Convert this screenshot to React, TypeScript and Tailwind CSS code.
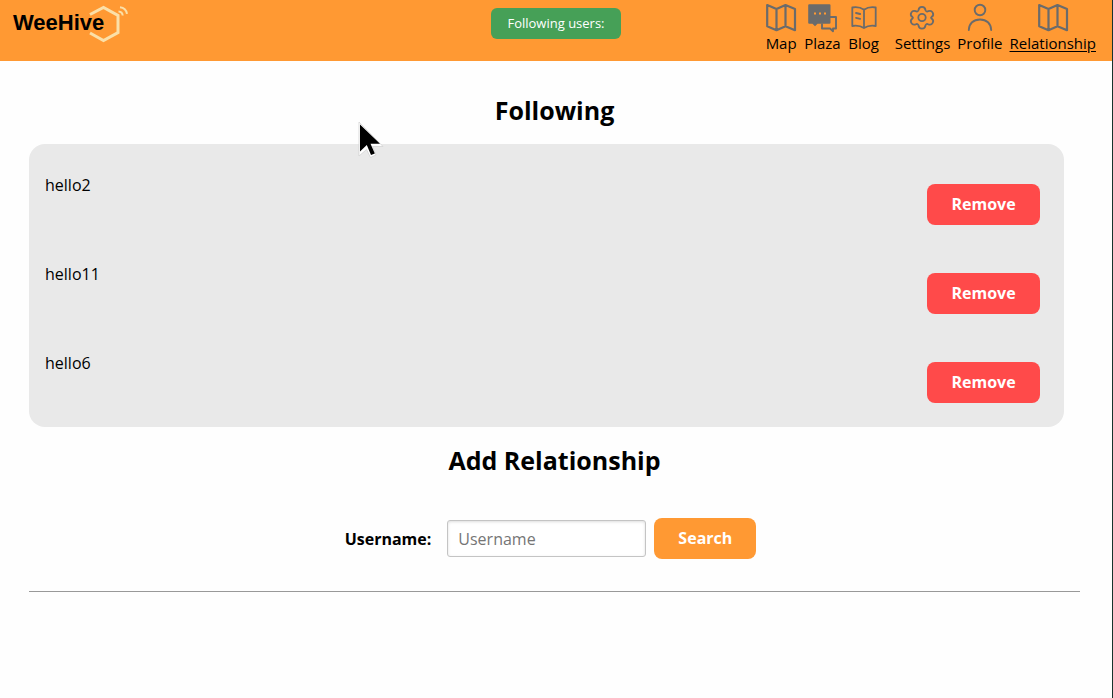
import React from "react";

const users = ["hello2", "hello11", "hello6"];

const iconClass = "block h-8 w-8 fill-none stroke-[#6b6b6b]";

function MapIcon() {
  return (
    <svg viewBox="0 0 32 32" className={iconClass} strokeWidth="2.200" strokeLinejoin="round" aria-hidden="true">
      <path d="M2.200 3 11.500 7 20.500 3 30 7V28.200L20.500 24.200 11.500 28.200 2.200 24.200ZM11.500 7V28.200M20.500 3V24.200" />
    </svg>
  );
}

function PlazaIcon() {
  return (
    <svg viewBox="0 0 32 32" className={iconClass} strokeWidth="1.9" strokeLinejoin="round" aria-hidden="true">
      <path d="M24 15h6v11.500H27v2.700L24 26.500H16v-5" />
      <path d="M3.200 2.200h20.300a1 1 0 0 1 1 1V20.800a1 1 0 0 1-1 1H11.500l-2.500 2.500L6.500 21.800H3.200a1 1 0 0 1-1-1V3.200a1 1 0 0 1 1-1Z" fill="#6b6b6b" stroke="none" />
      <path d="M8 11.500h2M13 11.500h2M18 11.500h2" stroke="#ff9933" />
    </svg>
  );
}

function BlogIcon() {
  return (
    <svg viewBox="0 0 32 32" className={iconClass} strokeWidth="1.8" strokeLinejoin="round" strokeLinecap="round" aria-hidden="true">
      <path d="M16 7.700C12.500 5.300 8.500 4.800 4.300 5.500v18.500c4.200-.7 8.200-.2 11.700 2.100 3.500-2.300 7.500-2.800 11.700-2.100V5.500c-4.200-.7-8.200-.2-11.700 2.200ZM16 7.700v18.400M8 11l4.200 1M8 15.800l4.200 1" />
    </svg>
  );
}

function SettingsIcon() {
  return (
    <svg viewBox="0 0 32 32" className={iconClass} strokeWidth="1.8" strokeLinejoin="round" aria-hidden="true">
      <circle cx="16" cy="15.500" r="3.700" />
      <path d="M12.500 8.200C13 3.800 19 3.800 19.500 8.200 20 9.500 21 9.800 22.300 9.200 26.200 7.600 29 12.700 25.600 15c-.7.500-.7 1 0 1.500 3.400 2.300.6 7.400-3.300 5.800-1.300-.6-2.300-.3-2.800 1-.5 4.400-6.500 4.400-7 0-.5-1.300-1.500-1.600-2.800-1-3.900 1.600-6.700-3.500-3.300-5.800.7-.5.7-1 0-1.500C3 12.700 5.800 7.600 9.700 9.200c1.300.6 2.300.3 2.800-1Z" />
    </svg>
  );
}

function ProfileIcon() {
  return (
    <svg viewBox="0 0 32 32" className={iconClass} strokeWidth="1.9" strokeLinecap="round" aria-hidden="true">
      <circle cx="16" cy="8" r="5.300" />
      <path d="M4.800 28C5 21.500 9.500 17.500 16 17.500s11 4 11.200 10.500" />
    </svg>
  );
}

function NavLink({ label, icon, active = false }: { label: string; icon: React.ReactNode; active?: boolean }) {
  return (
    <a href="#" className="flex flex-col items-center text-[15px] leading-[18px]">
      {icon}
      <span className={active ? "underline underline-offset-2" : ""}>{label}</span>
    </a>
  );
}

function Logo() {
  return (
    <a href="#" aria-label="WeeHive" className="block">
      <svg viewBox="0 0 132 48" className="block h-12 w-33">
        <path d="M90 14.500 103.500 7.500 118 15.500V32.500L103.500 40.500 90 33" fill="none" stroke="#fbe0a8" strokeWidth="3" />
        <path d="M118.500 11.500a4.500 4.500 0 0 1 4.200 4M120 7.200a8 8 0 0 1 7 6.600" fill="none" stroke="#fbe0a8" strokeWidth="2" />
        <text x="13" y="30" fontFamily="Liberation Sans, Arial, sans-serif" fontSize="22" fontWeight="700">WeeHive</text>
      </svg>
    </a>
  );
}

export default function App() {
  return (
    <div className="relative min-h-screen border-r border-[#17332d] bg-[#fefefe] font-['Open_Sans','Noto_Sans',sans-serif] text-base text-black">
      <header className="grid h-[61px] grid-cols-[1fr_auto_1fr] items-start bg-[#ff9933]">
        <Logo />
        <div role="status" className="mt-2 rounded-md bg-[#46a057] px-4 py-[6px] text-[13px] leading-[19px] text-white">
          Following users:
        </div>
        <nav className="flex justify-end gap-[7px] pr-4 pt-[2px]">
          <NavLink label="Map" icon={<MapIcon />} />
          <NavLink label="Plaza" icon={<PlazaIcon />} />
          <div className="mr-2"><NavLink label="Blog" icon={<BlogIcon />} /></div>
          <NavLink label="Settings" icon={<SettingsIcon />} />
          <NavLink label="Profile" icon={<ProfileIcon />} />
          <NavLink label="Relationship" icon={<MapIcon />} active />
        </nav>
      </header>

      <main className="pl-[29px] pr-8 pt-8">
        <h2 className="text-center text-[25px] leading-[35px] font-bold">Following</h2>
        <ul className="mt-4 mr-4 flex flex-col gap-9 rounded-2xl bg-[#e9e9e9] pt-7 pr-6 pb-6 pl-4">
          {users.map((name) => (
            <li key={name} className="flex items-start justify-between">
              <span className="leading-[26px]">{name}</span>
              <button type="button" aria-label={"Remove " + name} className="mt-3 h-[41px] w-[113px] rounded-lg bg-[#ff4a4a] pb-[2px] font-bold text-white">
                Remove
              </button>
            </li>
          ))}
        </ul>

        <h2 className="mt-4 text-center text-[25px] leading-[35px] font-bold">Add Relationship</h2>
        <form className="mt-10 mr-2 flex items-center justify-center gap-2">
          <label htmlFor="username" className="mr-2 font-bold">Username:</label>
          <input id="username" type="text" placeholder="Username" className="h-[37px] w-[199px] rounded-[3px] border border-[#c4c4c4] bg-white px-[10px] shadow-[inset_0_1px_3px_#dddddd] outline-none placeholder:text-[#757575]" />
          <button type="button" className="h-[41px] w-[102px] rounded-lg bg-[#ff9933] pb-[2px] font-bold text-white">Search</button>
        </form>
        <hr className="mt-8 border-[#999999]" />
      </main>

      <svg viewBox="0 0 27 38" className="pointer-events-none absolute left-[358px] top-[121px] h-[38px] w-[27px]" aria-hidden="true">
        <path d="M1 1V35L8.500 28.500 12.500 36.500 18 34 14.500 25.500H25Z" fill="#fff" stroke="#d0d0d0" strokeWidth=".7" />
        <path d="M2 3.500V30.500L8.800 24 13 34 16.800 32.500 12.500 22.800H22Z" fill="#000" />
      </svg>
    </div>
  );
}
